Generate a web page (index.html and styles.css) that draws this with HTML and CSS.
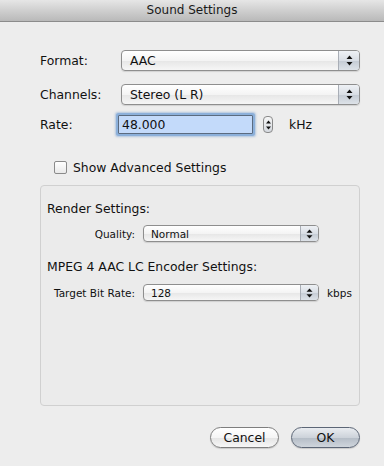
FILE: index.html
```html
<!DOCTYPE html>
<html>
<head>
<meta charset="utf-8">
<link rel="stylesheet" href="styles.css">
</head>
<body>
<div class="window">
  <div class="titlebar">Sound Settings</div>
  <div class="content">
    <div class="row row-format">
      <span class="lbl">Format:</span>
      <div class="popup big"><span class="ptext">AAC</span><span class="parrows"><svg width="7" height="11" viewBox="0 0 7 11"><path d="M3.5 0.5 L6.5 4 L0.5 4 Z M0.5 7 L6.5 7 L3.5 10.5 Z" fill="#111"/></svg></span></div>
    </div>
    <div class="row row-channels">
      <span class="lbl">Channels:</span>
      <div class="popup big"><span class="ptext">Stereo (L R)</span><span class="parrows"><svg width="7" height="11" viewBox="0 0 7 11"><path d="M3.5 0.5 L6.5 4 L0.5 4 Z M0.5 7 L6.5 7 L3.5 10.5 Z" fill="#111"/></svg></span></div>
    </div>
    <div class="row row-rate">
      <span class="lbl">Rate:</span>
      <div class="field"><span class="sel">48.000</span></div>
      <div class="stepper"><svg width="5" height="10" viewBox="0 0 5 10"><path d="M2.5 0.5 L5 3.5 L0 3.5 Z M0 6.5 L5 6.5 L2.5 9.5 Z" fill="#111"/></svg></div>
      <span class="unit">kHz</span>
    </div>
    <div class="check">
      <span class="box"></span>
      <span class="ctext">Show Advanced Settings</span>
    </div>
    <div class="group">
      <div class="ghead">Render Settings:</div>
      <div class="srow srow-quality">
        <span class="slbl">Quality:</span>
        <div class="popup small"><span class="ptext">Normal</span><span class="parrows"><svg width="7" height="10" viewBox="0 0 7 10"><path d="M3.5 0.5 L6.5 3.7 L0.5 3.7 Z M0.5 6.3 L6.5 6.3 L3.5 9.5 Z" fill="#111"/></svg></span></div>
      </div>
      <div class="ghead ghead2">MPEG 4 AAC LC Encoder Settings:</div>
      <div class="srow">
        <span class="slbl">Target Bit Rate:</span>
        <div class="popup small"><span class="ptext">128</span><span class="parrows"><svg width="7" height="10" viewBox="0 0 7 10"><path d="M3.5 0.5 L6.5 3.7 L0.5 3.7 Z M0.5 6.3 L6.5 6.3 L3.5 9.5 Z" fill="#111"/></svg></span></div>
        <span class="sunit">kbps</span>
      </div>
    </div>
    <div class="buttons">
      <div class="btn cancel">Cancel</div>
      <div class="btn ok">OK</div>
    </div>
  </div>
</div>
</body>
</html>
```
FILE: styles.css
```css
html, body {
  margin: 0;
  padding: 0;
}
body {
  width: 384px;
  height: 466px;
  overflow: hidden;
  background: #ededed;
  font-family: "DejaVu Sans", "Liberation Sans", sans-serif;
  font-size: 12.4px;
  color: #111;
}
.window {
  width: 384px;
  height: 466px;
  background: #ededed;
}
.titlebar {
  height: 21px;
  line-height: 21px;
  text-align: center;
  font-size: 12px;
  color: #1a1a1a;
  background: linear-gradient(to bottom, #e6e6e6 0%, #cfcfcf 50%, #b9b9b9 100%);
  border-bottom: 1px solid #8c8c8c;
}
.content {
  padding: 0 24px 0 40px;
}
.row {
  display: flex;
  align-items: center;
  height: 21px;
}
.row-format { margin-top: 28px; }
.row-channels { margin-top: 13px; }
.row-rate { margin-top: 9px; }
.lbl {
  width: 81px;
  flex: none;
}
.popup {
  display: flex;
  box-sizing: border-box;
  border: 1px solid #8e8e8e;
  border-radius: 4px;
  background: linear-gradient(to bottom, #ffffff 0%, #f4f4f4 50%, #e6e6e6 51%, #f6f6f6 100%);
  box-shadow: 0 1px 1px rgba(0,0,0,0.12);
  overflow: hidden;
}
.popup.big {
  width: 239px;
  height: 21px;
}
.popup .ptext {
  flex: 1;
  padding-left: 8px;
  display: flex;
  align-items: center;
}
.parrows {
  flex: none;
  width: 20px;
  border-left: 1px solid #a9aeb6;
  background: linear-gradient(to bottom, #eef1f5 0%, #d9dee5 50%, #c4cbd4 51%, #dde2e8 100%);
  display: flex;
  align-items: center;
  justify-content: center;
}
.field {
  box-sizing: border-box;
  width: 135px;
  height: 19px;
  margin-left: -3px;
  border: 1px solid #5b6b7f;
  background: #c3dafa;
  box-shadow: 0 0 0 2px #8cb0da, 0 0 2px 3px rgba(120,160,210,0.5);
  border-radius: 1px;
  display: flex;
  align-items: center;
  padding-left: 3px;
}
.stepper {
  box-sizing: border-box;
  width: 10px;
  height: 17px;
  margin-left: 10px;
  border: 1px solid #8a8a8a;
  border-radius: 4px;
  background: linear-gradient(to bottom, #f6f6f6, #d4d8de);
  display: flex;
  align-items: center;
  justify-content: center;
}
.unit {
  margin-left: 16px;
}
.check {
  display: flex;
  align-items: center;
  margin-top: 25px;
  margin-left: 14px;
  height: 14px;
}
.box {
  box-sizing: border-box;
  width: 13px;
  height: 13px;
  border: 1px solid #8a8a8a;
  border-radius: 2px;
  background: linear-gradient(to bottom, #ffffff, #e9e9e9);
  margin-right: 6px;
}
.group {
  box-sizing: border-box;
  margin-top: 11px;
  width: 320px;
  height: 221px;
  border: 1px solid #d0d0d0;
  border-radius: 4px;
  background: #ebebeb;
  padding: 15px 0 0 6px;
}
.ghead {
  line-height: 16px;
}
.ghead2 {
  margin-top: 17px;
}
.srow {
  display: flex;
  align-items: center;
  height: 17px;
  margin-top: 9px;
  font-size: 10.5px;
}
.srow-quality {
  margin-top: 8px;
}
.slbl {
  width: 96px;
  text-align: right;
  padding-right: 8px;
  box-sizing: border-box;
}
.popup.small {
  width: 176px;
  height: 17px;
}
.popup.small .ptext { padding-left: 7px; }
.popup.small .parrows { width: 17px; }
.sunit {
  margin-left: 8px;
}
.buttons {
  display: flex;
  justify-content: flex-end;
  gap: 12px;
  margin-top: 21px;
  width: 320px;
}
.btn {
  box-sizing: border-box;
  width: 69px;
  height: 21px;
  border-radius: 11px;
  display: flex;
  align-items: center;
  justify-content: center;
}
.cancel {
  border: 1px solid #7e7e7e;
  background: linear-gradient(to bottom, #ffffff 0%, #f5f5f5 50%, #e4e4e4 51%, #f7f7f7 100%);
  box-shadow: 0 1px 1px rgba(0,0,0,0.15);
}
.ok {
  border: 1px solid #5c6676;
  background: linear-gradient(to bottom, #e9ecf0 0%, #cdd3da 50%, #b4bcc6 51%, #cfd5dc 100%);
  box-shadow: 0 1px 1px rgba(0,0,0,0.15);
}
```
